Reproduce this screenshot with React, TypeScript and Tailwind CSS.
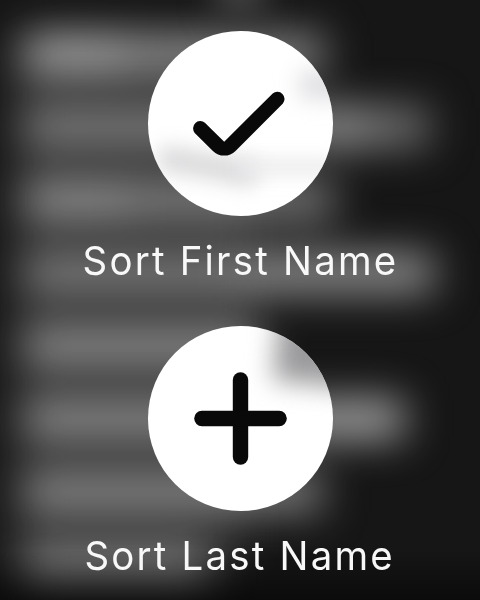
import clsx from "clsx";
import type { ReactNode } from "react";

// blurred contact list behind the menu, one entry per row
const rows = [
  ["w-[100px] bg-[#a0a0a0]", "w-[200px] bg-[#868686]"],
  ["w-[285px] bg-[#767676]", "w-[60px] bg-[#929292]", "w-[60px] bg-[#707070]"],
  ["w-[105px] bg-[#8a8a8a]", "w-[205px] bg-[#787878]"],
  ["w-[215px] bg-[#767676]", "w-[195px] bg-[#909090]"],
  ["w-[236px] bg-[#868686]"],
  ["w-[280px] bg-[#868686]", "w-[100px] bg-[#a4a4a4]"],
  ["w-[298px] bg-[#828282]"],
  ["w-[185px] bg-[#7c7c7c]"],
];

function Backdrop() {
  return (
    <div className="absolute inset-0 overflow-hidden bg-[#161616]">
      <div className="flex flex-col gap-[33px] pl-[24px] pt-[34px] blur-[21px]">
        {rows.map((segments, idx) => (
          <div key={idx} className="flex h-[40px] shrink-0">
            {segments.map((s) => (
              <div key={s} className={s} />
            ))}
          </div>
        ))}
      </div>
      {/* keeps the gaps between rows from going fully dark */}
      <div className="absolute left-[10px] top-[40px] h-[530px] w-[240px] bg-white/8 blur-[20px]" />
      <div className="absolute left-[215px] top-[-30px] h-[46px] w-[50px] bg-[#444444] blur-[16px]" />
      <div className="absolute inset-x-0 bottom-0 h-[50px] bg-linear-to-t from-black/50 to-transparent" />
    </div>
  );
}

function MenuItem({ label, icon, tints }: { label: string; icon: ReactNode; tints: string[] }) {
  return (
    <button type="button" className="flex h-[295px] w-[480px] flex-col items-center">
      <span className="relative block size-[185px] shrink-0 overflow-hidden rounded-full bg-white">
        {tints.map((t) => (
          <span key={t} className={clsx("absolute", t)} />
        ))}
        <svg viewBox="0 0 185 185" className="relative size-full" fill="#090909">
          {icon}
        </svg>
      </span>
      <span className="mt-[20px] scale-x-[0.96] whitespace-nowrap text-[40px] font-normal leading-[50px] tracking-[2.3px] text-[#f8f8f8]">
        {label}
      </span>
    </button>
  );
}

export default function App() {
  return (
    <main className="relative h-[600px] w-[480px] overflow-hidden font-['Inter',sans-serif]">
      <Backdrop />
      <div className="relative flex flex-col items-center pt-[31px]">
        <MenuItem
          label="Sort First Name"
          tints={[
            "left-[8px] top-[122px] h-[26px] w-[104px] rotate-[10deg] rounded-full bg-[#dadadc] blur-[10px]",
            "left-[90px] top-[128px] h-[16px] w-[100px] bg-[#ebebed] blur-[9px]",
            "left-[152px] top-[40px] h-[28px] w-[60px] bg-[#dedee2] blur-[11px]",
          ]}
          icon={
            <path d="M46.7 101.9A7.25 7.25 0 0 1 56.9 91.7L76.2 110.8L124.7 62.4A7.25 7.25 0 0 1 134.9 72.6L87.5 119.9A16 16 0 0 1 64.9 119.9Z" />
          }
        />
        <MenuItem
          label="Sort Last Name"
          tints={["left-[128px] top-[-10px] h-[70px] w-[110px] rotate-[6deg] bg-[#9a9a9c] blur-[13px]"]}
          icon={
            <>
              <rect x="84.8" y="46.2" width="15.4" height="92.6" rx="7.7" />
              <rect x="46.2" y="84.8" width="92.6" height="15.4" rx="7.7" />
            </>
          }
        />
      </div>
    </main>
  );
}
